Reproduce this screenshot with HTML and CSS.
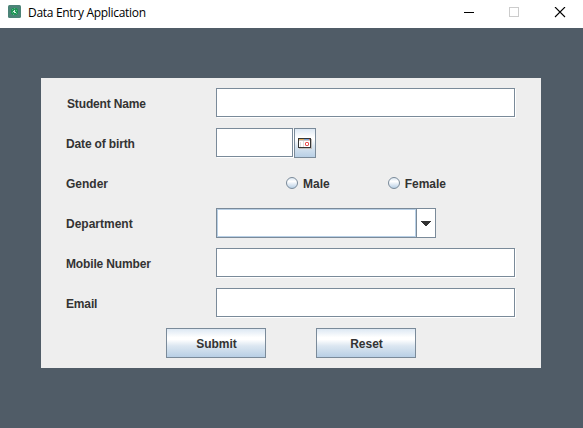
FILE: index.html
```html
<!DOCTYPE html>
<html lang="en">
<head>
<meta charset="utf-8">
<title>Data Entry Application</title>
<link rel="stylesheet" href="styles.css">
</head>
<body>
<header class="titlebar">
  <svg class="app-icon" width="13" height="13" viewBox="0 0 13 13">
    <rect width="13" height="13" rx="1.5" fill="#4b8377"/>
    <g shape-rendering="crispEdges">
      <path d="M4 3h5v1h1v5h-1v1h-5v-1h-1v-5h1z" fill="#209457"/>
      <path d="M6 3h1v1h-1zM4 4h1v1h-1zM8 5h1v1h-1zM4 7h1v1h-1zM8 8h1v1h-1zM5 9h1v1h-1z" fill="#54ba83"/>
      <path d="M6 5h1v3h-1zM5 6h1v1h-1zM7 7h1v1h-1z" fill="#d8f4e3"/>
    </g>
  </svg>
  <span class="title">Data Entry Application</span>
  <svg class="window-controls" width="103" height="12" viewBox="0 0 103 12" fill="none">
    <path d="M0 5.5h10" stroke="#000"/>
    <rect x="45.5" y=".5" width="9" height="9" stroke="#ccc"/>
    <path d="M91 0l10 10M101 0l-10 10" stroke="#000" stroke-width="1.1"/>
  </svg>
</header>
<main class="desktop">
  <form class="panel">
    <div class="row">
      <label class="label label-first tight" for="name">Student Name</label>
      <input class="field" id="name" type="text">
    </div>
    <div class="row">
      <label class="label tight" for="dob">Date of birth</label>
      <input class="field field-date" id="dob" type="text">
      <button class="button calendar" type="button" aria-label="Choose date">
        <svg width="14" height="12" viewBox="0 0 14 12" shape-rendering="crispEdges">
          <path d="M1 2h13v10H1z" fill="#c0bcb8"/>
          <path d="M0 1h13v10H0z" fill="#353535"/>
          <path d="M1 2h11v8H1z" fill="#fff"/>
          <path d="M1 2h5v1H1z" fill="#e0ad5c"/>
          <path d="M6 2h5v1H6z" fill="#7ba3d4"/>
          <path d="M11 2h1v1h-1z" fill="#d9705f"/>
          <path d="M1 3h11v1H1z" fill="#ccc8c8"/>
          <path d="M2 5h1v5H2zM5 4h1v6H5z" fill="#dedede"/>
          <path d="M8 5h2v1H8zM7 6h1v2H7zM10 6h1v2h-1zM8 8h2v1H8z" fill="#e95050"/>
          <path d="M7 5h1v1H7zM10 5h1v1h-1zM7 8h1v1H7zM10 8h1v1h-1z" fill="#f4abab"/>
        </svg>
      </button>
    </div>
    <div class="row">
      <span class="label">Gender</span>
      <div class="radios">
        <label class="radio"><input type="radio" name="gender"><span class="radio-text">Male</span></label>
        <label class="radio"><input type="radio" name="gender"><span class="radio-text">Female</span></label>
      </div>
    </div>
    <div class="row">
      <span class="label">Department</span>
      <div class="combo">
        <div class="combo-value"></div>
        <div class="combo-arrow">
          <svg width="10" height="5" viewBox="0 0 10 5" shape-rendering="crispEdges"><path d="M0 0h10v1H0zM1 1h8v1H1zM2 2h6v1H2zM3 3h4v1H3zM4 4h2v1H4z" fill="#333"/></svg>
        </div>
      </div>
    </div>
    <div class="row">
      <label class="label tight" for="mobile">Mobile Number</label>
      <input class="field" id="mobile" type="text">
    </div>
    <div class="row">
      <label class="label tight" for="email">Email</label>
      <input class="field" id="email" type="text">
    </div>
    <div class="actions">
      <button class="button action" type="button">Submit</button>
      <button class="button action" type="button">Reset</button>
    </div>
  </form>
</main>
</body>
</html>
```
FILE: styles.css
```css
* { box-sizing: border-box; }

body {
  margin: 0;
  height: 428px;
  overflow: hidden;
  background: #505c67;
  color: #333;
  font: bold 12px/30px "Liberation Sans", Arial, sans-serif;
}

.titlebar {
  display: flex;
  align-items: flex-start;
  height: 28px;
  padding: 5px 16px 0 8px;
  background: #fff;
}

.title {
  margin-left: 7px;
  color: #000;
  font: 12px/16px "Open Sans", "Noto Sans", sans-serif;
  letter-spacing: -0.3px;
}

.window-controls {
  margin: 2px 0 0 auto;
}

.desktop {
  padding: 50px 42px 60px 41px;
}

.panel {
  display: flex;
  flex-direction: column;
  gap: 10px;
  height: 290px;
  padding: 10px 25px;
  background: #eee;
}

.row {
  display: flex;
  height: 30px;
}

.label {
  width: 150px;
  padding-top: 1px;
}

.label-first { padding-left: 1px; }

.tight { letter-spacing: -0.15px; }

.field {
  width: 299px;
  height: 29px;
  padding: 0 4px;
  border: 1px solid #7a8a99;
  border-radius: 0;
  outline: 0;
  background: #fff;
  box-shadow: 1px 1px 0 #fff;
}

.field-date { width: 77px; }

.button {
  display: flex;
  align-items: center;
  justify-content: center;
  height: 30px;
  padding: 0;
  border: 1px solid #7a8a99;
  background: linear-gradient(#dde8f3 0%, #fff 30%, #fff 38%, #dce7f1 60%, #b8cfe5 100%);
  color: #333;
  font: inherit;
}

.calendar {
  width: 22px;
  margin-left: 1px;
}

.radios {
  display: flex;
  gap: 58px;
  padding-left: 70px;
}

.radio {
  display: flex;
  align-items: center;
  gap: 5px;
}

.radio-text { padding-top: 2px; }

.radio input {
  appearance: none;
  width: 12px;
  height: 12px;
  margin: 0;
  border: 1px solid #7a8a99;
  border-radius: 50%;
  background: linear-gradient(#dde8f3, #fff 35%, #b8cfe5);
}

.combo {
  display: flex;
  width: 220px;
  height: 30px;
  border: 1px solid #7a8a99;
  background: #fff;
}

.combo-value {
  width: 199px;
  border: 1px solid #b8cfe5;
}

.combo-arrow {
  display: flex;
  flex: 1;
  align-items: center;
  justify-content: center;
  border-left: 1px solid #7a8a99;
}

.actions {
  display: flex;
  gap: 50px;
  padding-left: 100px;
}

.action {
  width: 100px;
  padding: 2px 0 0 1px;
}
```
